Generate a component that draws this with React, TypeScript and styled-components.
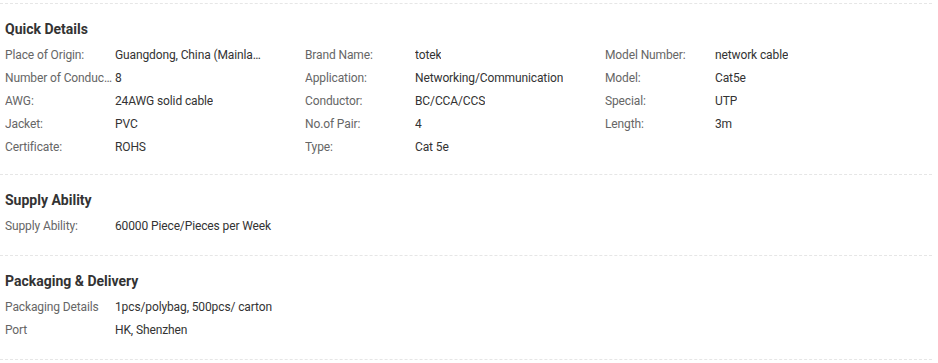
import React from 'react';
import styled, { createGlobalStyle } from 'styled-components';

const GlobalStyle = createGlobalStyle`
    body {
        margin: 0;
        background: #fff;
        font-family: Roboto, "Liberation Sans", Arial, sans-serif;
        font-size: 12px;
        color: #333;
    }
`;

const Wrapper = styled.div`
    width: 932px;
    margin-top: 3px;
    border-top: 1px dashed #e6e6e6;
`;

const Section = styled.section`
    padding: 15px 0 17px 5px;
    border-bottom: 1px dashed #e6e6e6;

    &:first-child {
        padding-bottom: 15px;
    }
`;

const Title = styled.h3`
    margin: 0 0 5px;
    font-size: 14px;
    line-height: 20px;
    font-weight: 700;
    color: #333;
`;

const Grid = styled.div<{ columns: number }>`
    display: grid;
    grid-template-columns: repeat(${p => p.columns}, 300px);
`;

const Item = styled.div`
    display: flex;
    line-height: 23px;
    white-space: nowrap;
    letter-spacing: -0.12px;
`;

const Label = styled.span`
    flex: 0 0 107px;
    padding-right: 3px;
    overflow: hidden;
    text-overflow: ellipsis;
    color: #666;
`;

const Value = styled.span<{ truncate?: boolean }>`
    color: #333;
    ${p => p.truncate && `
        max-width: 150px;
        overflow: hidden;
        text-overflow: ellipsis;
    `}
`;

type Attr = [string, string];

const quickDetails: Attr[] = [
    ['Place of Origin:', 'Guangdong, China (Mainland)'],
    ['Brand Name:', 'totek'],
    ['Model Number:', 'network cable'],
    ['Number of Conductors:', '8'],
    ['Application:', 'Networking/Communication'],
    ['Model:', 'Cat5e'],
    ['AWG:', '24AWG solid cable'],
    ['Conductor:', 'BC/CCA/CCS'],
    ['Special:', 'UTP'],
    ['Jacket:', 'PVC'],
    ['No.of Pair:', '4'],
    ['Length:', '3m'],
    ['Certificate:', 'ROHS'],
    ['Type:', 'Cat 5e'],
];

const supply: Attr[] = [['Supply Ability:', '60000 Piece/Pieces per Week']];

const packaging: Attr[] = [
    ['Packaging Details', '1pcs/polybag, 500pcs/ carton'],
    ['Port', 'HK, Shenzhen'],
];

const DetailSection: React.FC<{ title: string; items: Attr[]; columns: number }> = ({
    title,
    items,
    columns,
}) => (
    <Section>
        <Title>{title}</Title>
        <Grid columns={columns}>
            {items.map(([label, value]) => (
                <Item key={label}>
                    <Label>{label}</Label>
                    <Value truncate={columns > 1}>{value}</Value>
                </Item>
            ))}
        </Grid>
    </Section>
);

export default function App() {
    return (
        <>
            <GlobalStyle />
            <Wrapper>
                <DetailSection title="Quick Details" items={quickDetails} columns={3} />
                <DetailSection title="Supply Ability" items={supply} columns={1} />
                <DetailSection title="Packaging & Delivery" items={packaging} columns={1} />
            </Wrapper>
        </>
    );
}
